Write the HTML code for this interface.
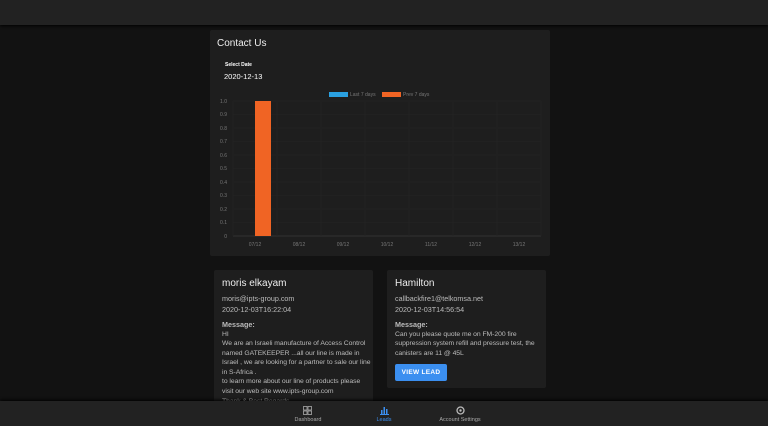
<!DOCTYPE html>
<html><head><style>
*{margin:0;padding:0;box-sizing:border-box}
body{width:768px;height:426px;background:#121212;font-family:"Liberation Sans",sans-serif;position:relative;overflow:hidden;color:#ddd}
.top{position:absolute;left:0;top:0;width:768px;height:25px;background:#222;box-shadow:0 1px 3px #000}
.card{position:absolute;background:#1e1e1e;border-radius:2px}
.sm{font-size:7.2px;color:#bbb;line-height:10.5px;white-space:nowrap}
.msg{font-size:6.8px;letter-spacing:-0.05px}
.nav{position:absolute;left:0;top:401px;width:768px;height:25px;background:#222;box-shadow:0 -1px 3px #000}
.nav div{position:absolute;top:16px;font-size:5.5px;color:#aaa;text-align:center;width:60px}
</style></head><body>
<div class="top"></div>
<div class="card" style="left:210px;top:30px;width:340px;height:226px">
 <div style="position:absolute;left:7px;top:8px;font-size:10px;color:#eee">Contact Us</div>
 <div style="position:absolute;left:15px;top:32px;font-size:5px;color:#fff;font-weight:bold">Select Date</div>
 <div style="position:absolute;left:14px;top:42px;font-size:7.5px;color:#fff">2020-12-13</div>
 <svg style="position:absolute;left:0;top:0" width="340" height="226" font-family="Liberation Sans" font-size="5" fill="#777">
  <rect x="119" y="62" width="19" height="5" fill="#2aa0e0"/><text x="140" y="66">Last 7 days</text>
  <rect x="172" y="62" width="19" height="5" fill="#f06424"/><text x="193" y="66">Prev 7 days</text>
  <g stroke="#252525" stroke-width="0.5">
   <line x1="23" y1="71" x2="331" y2="71"/><line x1="23" y1="84.5" x2="331" y2="84.5"/><line x1="23" y1="98" x2="331" y2="98"/><line x1="23" y1="111.5" x2="331" y2="111.5"/><line x1="23" y1="125" x2="331" y2="125"/><line x1="23" y1="138.5" x2="331" y2="138.5"/><line x1="23" y1="152" x2="331" y2="152"/><line x1="23" y1="165.5" x2="331" y2="165.5"/><line x1="23" y1="179" x2="331" y2="179"/><line x1="23" y1="192.5" x2="331" y2="192.5"/><line x1="23" y1="206" x2="331" y2="206" stroke="#444"/>
   <line x1="23" y1="71" x2="23" y2="206"/><line x1="67" y1="71" x2="67" y2="206"/><line x1="111" y1="71" x2="111" y2="206"/><line x1="155" y1="71" x2="155" y2="206"/><line x1="199" y1="71" x2="199" y2="206"/><line x1="243" y1="71" x2="243" y2="206"/><line x1="287" y1="71" x2="287" y2="206"/><line x1="331" y1="71" x2="331" y2="206"/>
  </g>
  <g text-anchor="end"><text x="17" y="73">1.0</text><text x="17" y="86">0.9</text><text x="17" y="100">0.8</text><text x="17" y="113">0.7</text><text x="17" y="127">0.6</text><text x="17" y="140">0.5</text><text x="17" y="154">0.4</text><text x="17" y="167">0.3</text><text x="17" y="181">0.2</text><text x="17" y="194">0.1</text><text x="17" y="208">0</text></g>
  <rect x="45" y="71" width="16" height="135" fill="#f06424"/>
  <g text-anchor="middle"><text x="45" y="216">07/12</text><text x="89" y="216">08/12</text><text x="133" y="216">09/12</text><text x="177" y="216">10/12</text><text x="221" y="216">11/12</text><text x="265" y="216">12/12</text><text x="309" y="216">13/12</text></g>
 </svg>
</div>
<div class="card" style="left:214px;top:270px;width:159px;height:140px;overflow:hidden;padding:8px 4px 8px 8px">
 <div style="font-size:10px;color:#eee;margin-bottom:5px">moris elkayam</div>
 <div class="sm">moris@ipts-group.com</div>
 <div class="sm" style="margin-bottom:5px">2020-12-03T16:22:04</div>
 <div class="sm" style="font-weight:bold">Message:</div>
 <div class="sm msg" style="line-height:9.6px;margin-top:-1px">HI<br>We are an Israeli manufacture of Access Control<br>named GATEKEEPER ...all our line is made in<br>Israel , we are looking for a partner to sale our line<br>in S-Africa .<br>to learn more about our line of products please<br>visit our web site www.ipts-group.com<br>Thank &amp; Best Regards</div>
</div>
<div class="card" style="left:387px;top:270px;width:159px;height:118px;padding:8px 4px 8px 8px">
 <div style="font-size:10px;color:#eee;margin-bottom:5px">Hamilton</div>
 <div class="sm">callbackfire1@telkomsa.net</div>
 <div class="sm" style="margin-bottom:5px">2020-12-03T14:56:54</div>
 <div class="sm" style="font-weight:bold">Message:</div>
 <div class="sm msg" style="line-height:9.6px;margin-top:-1px">Can you please quote me on FM-200 fire<br>suppression system refill and pressure test, the<br>canisters are 11 @ 45L</div>
 <div style="position:absolute;left:8px;top:94px;width:52px;height:17px;background:#3b8ff0;border-radius:2px;color:#fff;font-size:6.5px;font-weight:bold;text-align:center;line-height:17px;letter-spacing:.3px">VIEW LEAD</div>
</div>
<div class="nav">
 <svg style="position:absolute;left:303px;top:5px" width="9" height="9" fill="none" stroke="#aaa" stroke-width="0.8"><rect x="0.5" y="0.5" width="3.5" height="3.5"/><rect x="5" y="0.5" width="3.5" height="3.5"/><rect x="0.5" y="5" width="3.5" height="3.5"/><rect x="5" y="5" width="3.5" height="3.5"/></svg>
 <div style="left:278px">Dashboard</div>
 <svg style="position:absolute;left:380px;top:5px" width="9" height="9" fill="#3b8ff0"><rect x="0" y="8" width="9" height="1"/><rect x="1" y="4" width="1.5" height="4"/><rect x="3.5" y="1" width="1.5" height="7"/><rect x="6" y="3" width="1.5" height="5"/></svg>
 <div style="left:354px;color:#3b8ff0">Leads</div>
 <svg style="position:absolute;left:456px;top:5px" width="9" height="9"><circle cx="4.5" cy="4.5" r="3.5" fill="none" stroke="#bbb" stroke-width="1.3"/><circle cx="4.5" cy="4.5" r="1.2" fill="#bbb"/></svg>
 <div style="left:430px">Account Settings</div>
</div>
</body></html>
